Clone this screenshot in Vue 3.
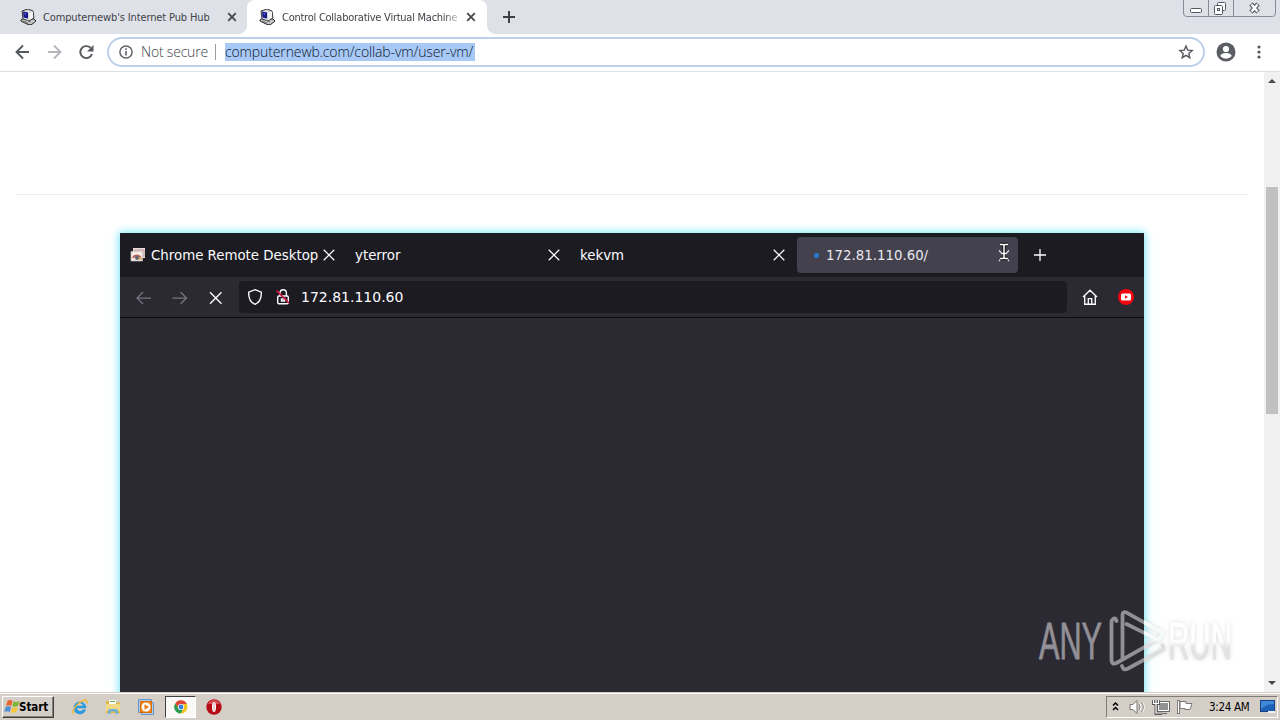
<script setup>
const tabs = [
  { title: "Computernewb's Internet Pub Hub", active: false },
  { title: 'Control Collaborative Virtual Machine', active: true },
]
const innerTabs = [
  { title: 'Chrome Remote Desktop', icon: true },
  { title: 'yterror' },
  { title: 'kekvm' },
]
</script>

<template>
  <div class="screen">
    <header class="tabstrip">
      <div v-for="t in tabs" :key="t.title" class="tab" :class="{ active: t.active }">
        <svg class="fav" width="16" height="16" viewBox="0 0 16 16">
          <path d="M1 11l3-2 10 1 2 2-5 4-4-1-6-3z" fill="#c8c8c8" stroke="#222" />
          <path d="M2 2l6-2 5 2 1 7-5 3-6-2z" fill="#d8d8dc" stroke="#222" stroke-width=".9" />
          <path d="M3 2.500l5 1v6l-4.500-1z" fill="#15158c" />
          <path d="M4 4l2 .5v2z" fill="#7080e0" />
          <path d="M9 4l4-1.500v6L9.500 11z" fill="#f4f4f4" />
          <path d="M3 12l5 2M6 11l5 2" stroke="#777" />
        </svg>
        <span class="title">{{ t.title }}</span>
        <svg class="x" width="10" height="10" viewBox="0 0 10 10"><path d="M1.200 1.200l7.600 7.600M8.800 1.200L1.200 8.800" stroke="#45484c" stroke-width="1.800" /></svg>
      </div>
      <svg class="newtab" width="12" height="12" viewBox="0 0 12 12"><path d="M6 0v12M0 6h12" stroke="#3c4043" stroke-width="2" /></svg>
      <svg class="winctl" width="94" height="18" viewBox="0 0 94 18">
        <path d="M.5 0v13q0 3.500 3 3.500h86q3 0 3-3.500V0M25.500 0v16M50.500 0v16" fill="none" stroke="#878b96" />
        <rect x="7.500" y="8.500" width="11" height="4" rx="1" fill="#fff" stroke="#555861" />
        <g fill="#fff" stroke="#555861"><rect x="34.500" y="2.500" width="8" height="8" rx="1" /><rect x="31.500" y="5.500" width="8" height="9" rx="1" /><rect x="34.500" y="8.500" width="2" height="2" /></g>
        <path d="M68 4l7 8M75 4l-7 8" stroke="#555861" stroke-width="4.600" />
        <path d="M68.500 4.500l6 7M74.500 4.500l-6 7" stroke="#fff" stroke-width="2.400" />
      </svg>
    </header>

    <div class="toolbar">
      <svg class="nav" width="80" height="16" viewBox="0 0 80 16">
        <g fill="none" stroke-width="1.900">
          <path d="M14 8H1.500M8 1.500L1.500 8 8 14.500" stroke="#55585c" />
          <path d="M33 8h12.500M39 1.500L45.500 8 39 14.500" stroke="#b4b6b9" />
          <path d="M77 10a6 6 0 1 1-1.500-6.200" stroke="#55585c" />
        </g>
        <path d="M78.500 1v6.500H72z" fill="#55585c" />
      </svg>
      <div class="omnibox">
        <svg class="info" width="14" height="14" viewBox="0 0 14 14"><circle cx="7" cy="7" r="6.100" fill="none" stroke="#5f6368" stroke-width="1.500" /><path d="M7 6v4.500M7 3.200v1.700" stroke="#5f6368" stroke-width="1.600" /></svg>
        <span class="notsec">Not secure</span>
        <i class="sep"></i>
        <span class="url">computernewb.com/collab-vm/user-vm/</span>
        <svg class="star" width="16" height="16" viewBox="0 0 16 16"><path d="M8 2l1.700 4.100 4.400.4-3.300 2.900 1 4.300L8 11.400l-3.800 2.300 1-4.300-3.300-2.900 4.400-.4z" fill="none" stroke="#55585c" stroke-width="1.400" /></svg>
      </div>
      <svg class="avatar" width="20" height="20" viewBox="0 0 20 20"><circle cx="10" cy="10" r="9.500" fill="#5a5d62" /><circle cx="10" cy="7" r="3.100" fill="#fff" /><path d="M4.200 14q1-3 5.800-3t5.800 3q-2.200 2.700-5.800 2.700T4.200 14z" fill="#fff" /></svg>
      <svg class="dots" width="4" height="14" viewBox="0 0 4 14"><g fill="#55585c"><circle cx="2" cy="2" r="1.600" /><circle cx="2" cy="7" r="1.600" /><circle cx="2" cy="12" r="1.600" /></g></svg>
    </div>

    <main class="content">
      <div class="page">
        <div class="rule"></div>
        <section class="vm">
          <div class="vmtabs">
            <div v-for="t in innerTabs" :key="t.title" class="vmtab" :class="{ wide: t.icon }">
              <svg v-if="t.icon" class="crd" width="16" height="14" viewBox="0 0 16 14">
                <path d="M3 0h12v10H3z" fill="#e9dedd" /><path d="M4 2h10M14 2v7" stroke="#b99691" />
                <path d="M1 3.500h11.500V13H1z" fill="#f7eeec" stroke="#c9b7b4" stroke-width=".7" />
                <path d="M3 10a4 4 0 0 1 7.500 0" fill="none" stroke="#b86055" stroke-width="2" /><circle cx="7" cy="10" r="2" fill="#5d6674" /><path d="M9 9l3 1v2H9z" fill="#d9b96b" />
              </svg>
              <span>{{ t.title }}</span>
              <svg width="12" height="12" viewBox="0 0 12 12"><path d="M.7.7l10.600 10.600M11.300.7L.7 11.300" stroke="#fbfbfe" stroke-width="1.250" /></svg>
            </div>
            <div class="vmtab current">
              <i class="spin"></i>
              <span>172.81.110.60/</span>
              <svg width="14" height="24" viewBox="-1 0 14 24">
                <path d="M1 9.500l10 10.500M11 9.500L1 20" stroke="#dddde2" stroke-width="1.300" />
                <path d="M2 3.500h3l1 1 1-1h3M6 4v13M2 17.500h3l1-1 1 1h3M4 12.500h4" fill="none" stroke="#111" stroke-width="3.400" />
                <path d="M2 3.500h3l1 1 1-1h3M6 4v13M2 17.500h3l1-1 1 1h3M4 12.500h4" fill="none" stroke="#fff" stroke-width="1.500" />
              </svg>
            </div>
            <svg class="plus" width="12" height="12" viewBox="0 0 12 12"><path d="M6 0v12M0 6h12" stroke="#fbfbfe" stroke-width="1.300" /></svg>
          </div>
          <div class="vmbar">
            <svg class="vmnav" width="87" height="14" viewBox="0 0 87 14">
              <g fill="none" stroke="#77767f" stroke-width="1.250"><path d="M15 7H1M7 1L1 7l6 6M36.500 7h14M44.500 1l6 6-6 6" /><path d="M74 1.300L85.500 12.800M85.500 1.300L74 12.800" stroke="#fbfbfe" stroke-width="1.400" /></g>
            </svg>
            <div class="vmurl">
              <svg width="46" height="18" viewBox="0 0 46 18" fill="none" stroke="#fbfbfe" stroke-width="1.400">
                <path d="M8 1.700l6.300 2.500c.2 5-1.300 10-6.300 12.100C3 14.200 1.500 9.200 1.700 4.200z" />
                <rect x="30.700" y="8" width="10.600" height="7.800" rx="1.300" /><path d="M33 8V5a3.200 3.200 0 0 1 6.400 0v3M34.500 11h3v2h-3z" /><path d="M29.500 2.500L42 15" stroke="#d51543" stroke-width="1.700" />
              </svg>
              <span>172.81.110.60</span>
            </div>
            <svg class="home" width="16" height="16" viewBox="0 0 16 16" fill="none" stroke="#fbfbfe" stroke-width="1.350"><path d="M1 8L8 1.200 15 8M2.700 6.800v8.400h10.600V6.800M6.300 15V9.600h3.400V15" /></svg>
            <svg class="yt" width="16" height="16" viewBox="0 0 16 16"><circle cx="8" cy="8" r="8" fill="#f00510" /><rect x="3" y="4.500" width="10" height="7" rx="1.500" fill="#fff" /><path d="M7 6.300L10 8 7 9.700z" fill="#f00510" /></svg>
          </div>
        </section>
      </div>
      <div class="scroll">
        <svg width="8" height="4" viewBox="0 0 8 4"><path d="M0 4l4-4 4 4z" fill="#4a4a4a" /></svg>
        <div class="thumb"></div>
        <svg width="8" height="4" viewBox="0 0 8 4"><path d="M0 0h8L4 4z" fill="#4a4a4a" /></svg>
      </div>
    </main>

    <footer class="taskbar">
      <div class="start">
        <svg width="16" height="16" viewBox="0 0 16 16"><path d="M3.500 2Q6 .2 8.500 2L7.300 7Q5 5.500 2 7z" fill="#e8642c" /><path d="M9.500 2.500q3 1 6-.5l-1.500 5q-3 1.500-5.700.3z" fill="#7db73a" /><path d="M1.700 8q3-1.500 5.300 0l-1.200 5Q3 11.500.3 13z" fill="#4b8fd6" /><path d="M8 8.300q3 1.200 5.700-.3l-1.500 5q-3 1.400-5.500.2z" fill="#f5c63b" /></svg>
        <span>Start</span>
      </div>
      <svg class="task" width="16" height="16" viewBox="0 0 16 16"><path d="M14.200 9.200H5a3.300 3.300 0 0 0 6 1.300h3A6.300 6.300 0 1 1 14.200 9.200zM5 6.800h6a3.050 3.050 0 0 0-6 0z" fill="#2c9ade" fill-rule="evenodd" /><path d="M1.500 15C-1 11 7 2 13 1c2.500 0 2.500 2 1.700 3.500" fill="none" stroke="#efb92f" stroke-width="1.300" /></svg>
      <svg class="task" width="16" height="16" viewBox="0 0 16 16"><path d="M1 2h5l1 1.500h8V14H1z" fill="#dfb944" /><path d="M4 1h7v5H4z" fill="#fff" /><path d="M5 2.500h5" stroke="#60a850" /><path d="M1 5h14v7H1z" fill="#f0d982" /><path d="M3 15v-3q0-2 2-2h6q2 0 2 2v3h-2.500v-2.500h-5V15z" fill="#6fb0d6" /></svg>
      <svg class="task" width="16" height="16" viewBox="0 0 16 16"><path d="M.5 .5h13v3h2v12h-12v-2h-3z" fill="#a9cff0" stroke="#6794c4" /><rect x="2.500" y="2.500" width="11" height="11" fill="#f58716" stroke="#d66d09" /><circle cx="8" cy="8" r="4.500" fill="#fff" /><path d="M6.500 5.200L11 8l-4.500 2.800z" fill="#ee7711" /></svg>
      <div class="pressed">
        <svg width="14" height="14" viewBox="0 0 14 14"><circle cx="7" cy="7" r="6.500" fill="#f3c61f" /><path d="M1.300 3.500A6.500 6.500 0 0 1 12.800 4H7L4.500 8.500z" fill="#df4436" /><path d="M1.300 3.500A6.500 6.500 0 0 0 6.500 13.500L9.600 8.500 7 10 4.200 8.500z" fill="#279a55" /><circle cx="7" cy="7" r="3.100" fill="#fff" /><circle cx="7" cy="7" r="2.400" fill="#3a7de0" /></svg>
      </div>
      <svg class="opera" width="16" height="16" viewBox="0 0 16 16"><circle cx="8" cy="8" r="7.700" fill="#b50d16" /><path d="M2 5a6.500 6.500 0 0 1 12 0" fill="#d64b50" /><ellipse cx="8" cy="8" rx="2" ry="5" fill="#fff" /><path d="M8 3.500v9" stroke="#d6a5a7" stroke-width="1" /></svg>
      <div class="tray">
        <svg width="88" height="16" viewBox="0 0 88 16" fill="none">
          <path d="M3 6.500l2.500-2.500 2.500 2.500M3 11l2.500-2.500L8 11" stroke="#000" stroke-width="1.500" />
          <path d="M20 5.500h3l4-4v13l-4-4h-3z" fill="#fff" stroke="#777" /><path d="M29.500 5q2 3 0 6M32 3q3.500 5 0 10" stroke="#fff" stroke-width="2" /><path d="M29 5q2 3 0 6M31.500 3q3.500 5 0 10" stroke="#777" />
          <path d="M48.500 3.500h10v8h-10z" fill="#929292" stroke="#fff" /><path d="M47.500 2.500h12v10h-12zM51 14.500h6" stroke="#666" /><path d="M43.500 1v3.500h5V1M46 1v13.500h6" stroke="#555" stroke-width="3" /><path d="M43.500 1v3.500h5V1M46 1v13h6" stroke="#fff" stroke-width="1.200" />
          <path d="M68.500 1v14" stroke="#666" stroke-width="2.500" /><path d="M68.500 2v12" stroke="#fff" /><path d="M70 2.500h6v2h6l-2 6h-5v-1h-5z" fill="#fff" stroke="#777" />
        </svg>
        <span>3:24 AM</span>
        <svg class="desk" width="16" height="14" viewBox="0 0 16 14"><rect x=".5" y=".5" width="14" height="11" fill="#1f60b7" stroke="#183f80" /><path d="M1 1h13v3Q7 4 1 9z" fill="#4089d9" /><path d="M8 12h7" stroke="#e8f2fc" stroke-width="2" /></svg>
      </div>
    </footer>

    <svg class="mark" width="250" height="76" viewBox="0 0 250 76">
      <defs>
        <linearGradient id="fade" x1="0" y1="0" x2="0" y2="1"><stop offset=".5" stop-color="#fff" /><stop offset=".6" stop-color="#e2e2e3" /></linearGradient>
        <linearGradient id="fadeTri" gradientUnits="userSpaceOnUse" x1="0" y1="0" x2="0" y2="76"><stop offset=".46" stop-color="#f5fafb" /><stop offset=".52" stop-color="#dcdedf" /></linearGradient>
        <clipPath id="left"><path d="M0 0h114v76H0z" /></clipPath>
        <clipPath id="right"><path d="M114 0h60v76h-60z" /></clipPath>
        <path id="tri" d="M86.500 16q-1-4-3.500-2-1.500 1-1.500 4V55q0 5 5 3L126 35.500M92.500 53V10q0-4 4.500-2.200L133 28l-4.500 7L96.500 19M92 61q1 5 6 2.500L132.500 45q2-1 0-5" />
      </defs>
      <text x="9" y="54" textLength="63" lengthAdjust="spacingAndGlyphs" fill="#929096" stroke="#929096" stroke-width=".8">ANY</text>
      <g fill="none" stroke-width="3.800" stroke-linecap="round" stroke-linejoin="round">
        <g clip-path="url(#left)"><use href="#tri" stroke="#929096" /></g>
        <g clip-path="url(#right)"><use class="lite" href="#tri" stroke="url(#fadeTri)" /></g>
      </g>
      <text class="lite" x="138" y="54" textLength="64" lengthAdjust="spacingAndGlyphs" fill="url(#fade)" stroke="url(#fade)" stroke-width=".8">RUN</text>
    </svg>
  </div>
</template>

<style>
body { margin: 0; overflow: hidden; }
</style>

<style scoped>
.screen { width: 1280px; height: 720px; position: relative; display: flex; flex-direction: column; overflow: hidden; background: #fff; font-family: "DejaVu Sans Condensed", "DejaVu Sans", sans-serif; box-sizing: border-box; }
.screen * { box-sizing: border-box; }
svg { display: block; flex: none; }
span { white-space: nowrap; }
.tabstrip { height: 34px; flex: none; background: #dee1e7; display: flex; align-items: center; }
.tab { width: 247px; height: 34px; display: flex; align-items: center; padding: 0 9px 0 20px; color: #3f4247; font: 11px "DejaVu Sans Condensed", "DejaVu Sans", sans-serif; font-stretch: condensed; }
.tab .title { margin-left: 7px; width: 178px; letter-spacing: -0.13px; }
.tab .x { margin-left: 6px; }
.tab.active { width: 240px; background: #fff; border-radius: 8px 8px 0 0; position: relative; padding-left: 12px; }
.tab.active .title { letter-spacing: -0.25px; width: 176px; mask-image: linear-gradient(90deg, #000 92%, #0004 100%); }
.tab.active .x { margin-left: 8px; }
.tab.active::before, .tab.active::after { content: ""; position: absolute; bottom: 0; width: 8px; height: 8px; background: radial-gradient(circle at 0 0, transparent 7.5px, #fff 8px); left: -8px; }
.tab.active::after { left: auto; right: -8px; background: radial-gradient(circle at 100% 0, transparent 7.5px, #fff 8px); }
.newtab { margin-left: 16px; }
.winctl { margin: 0 3px 0 auto; align-self: flex-start; }
.toolbar { height: 38px; flex: none; display: flex; align-items: center; border-bottom: 1px solid #dcdee1; background: #fff; padding-bottom: 1px; }
.nav { margin-left: 15px; }
.omnibox { margin-left: 12px; width: 1098px; height: 30px; border: 2px solid #bdcfec; border-radius: 15px; display: flex; align-items: center; padding: 0 10px; color: #404347; font: 300 14px "Open Sans", "Noto Sans", sans-serif; }
.notsec { margin-left: 8px; width: 67px; letter-spacing: -0.2px; line-height: 17px; padding-bottom: 1px; }
.sep { width: 1px; height: 16px; background: #9a9da1; margin: 0 9px 0 7px; }
.url { color: #0b1830; background: #a8c8f5; height: 18px; line-height: 17px; width: 250px; letter-spacing: -0.12px; }
.star { margin-left: auto; margin-right: -1px; }
.avatar { margin-left: 11px; }
.dots { margin-left: 21px; }
.content { flex: 1; display: flex; min-height: 0; }
.page { width: 1264px; overflow: hidden; padding: 122px 16px 0; }
.rule { height: 1px; background: #ececec; }
.vm { width: 1024px; height: 500px; margin: 38px 0 0 104px; background: #2b2a33; box-shadow: 0 0 8px 1px #70e6f4; font: 14px "DejaVu Sans", sans-serif; color: #fbfbfe; }
.vmtabs { height: 44px; background: #1c1b22; display: flex; align-items: center; padding-left: 10px; font-size: 13.35px; }
.vmtab { width: 225px; padding: 0 9px 0 21px; display: flex; align-items: center; justify-content: space-between; }
.vmtab.wide { width: 206px; padding: 0; justify-content: flex-start; }
.wide span { margin: 0 4px 0 5px; width: 168px; }
.wide + .vmtab { margin-left: 0; width: 234px; padding-left: 19px; padding-right: 10px; }
.vmtab:nth-child(3) { width: 221px; padding-left: 10px; padding-right: 6px; }
.vmtab.current { height: 36px; margin-left: 6px; width: 221px; background: #42414d; border-radius: 4px; padding: 0 7px 0 17px; color: #e8e8ee; justify-content: flex-start; }
.spin { width: 5px; height: 5px; border-radius: 50%; background: #267bd0; margin-right: 7px; }
.current svg { margin-left: auto; align-self: flex-start; margin-top: 4px; }
.plus { margin-left: 16px; }
.vmbar { height: 41px; display: flex; align-items: center; border-bottom: 1px solid #0c0c10; }
.vmnav { margin-left: 16px; margin-top: 1px; }
.vmurl { width: 828px; height: 32px; margin-left: 16px; background: #1c1b22; border-radius: 4px; display: flex; align-items: center; padding-left: 8px; }
.vmurl span { margin-left: 8px; }
.home { margin-left: 15px; }
.yt { margin-left: 20px; }
.scroll { width: 16px; background: #f1f1f1; display: flex; flex-direction: column; align-items: center; padding: 7px 0; }
.thumb { width: 12px; height: 227px; background: #c1c1c1; margin: 104px 0 auto; }
.taskbar { height: 28px; flex: none; background: #d5cec6; border-top: 1px solid #d5cec6; box-shadow: inset 0 1px #fff; display: flex; align-items: center; padding: 1px 2px 0 2px; font-size: 12px; color: #000; }
.start { width: 52px; height: 22px; display: flex; align-items: center; padding-left: 1px; border: 1px solid; border-color: #fff #404040 #404040 #fff; box-shadow: inset -1px -1px #858078; font: bold 11.5px "DejaVu Sans Condensed", "DejaVu Sans", sans-serif; letter-spacing: -0.05px; }
.start span { margin-left: -1px; }
.task { margin-left: 17px; }
.start + .task { margin-left: 18px; }
.pressed { width: 31px; height: 22px; margin-left: 11px; border: 1px solid; border-color: #404040 #fff #fff #404040; background: #faf9f7; display: flex; align-items: center; justify-content: center; }
.opera { margin-left: 10px; }
.tray { margin-left: auto; width: 172px; height: 22px; border: 1px solid; border-color: #807b74 #fff #fff #807b74; display: flex; align-items: center; padding-left: 3px; }
.tray span { margin-left: 11px; width: 42px; font: 11.5px "DejaVu Sans Condensed", "DejaVu Sans", sans-serif; letter-spacing: -0.3px; }
.desk { margin-left: 9px; }
.mark { position: absolute; left: 1030px; top: 605px; overflow: visible; font: 51px "Liberation Sans", sans-serif; }
.lite { filter: drop-shadow(0 0 2px #0002); }
</style>
